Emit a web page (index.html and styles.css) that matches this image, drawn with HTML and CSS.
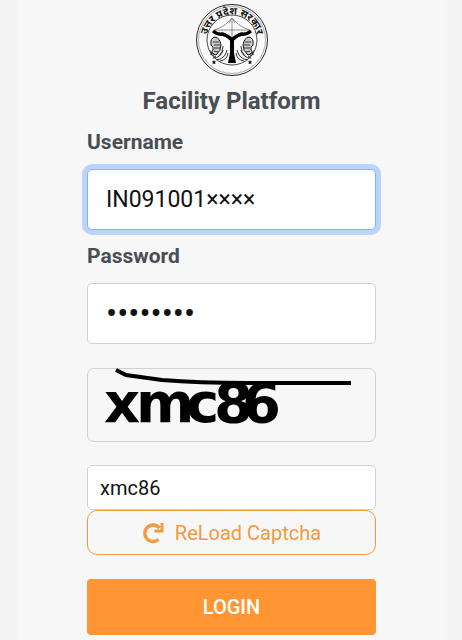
FILE: index.html
```
<!DOCTYPE html>
<html lang="en">
<head>
	<meta charset="utf-8">
	<meta name="viewport" content="width=device-width, initial-scale=1">
	<title>Facility Platform</title>
	<link rel="stylesheet" href="styles.css">
</head>
<body>
	<main class="panel">
		<svg class="emblem" viewBox="0 0 74 74" role="img" aria-label="Uttar Pradesh Sarkar">
			<defs>
				<path id="arc" d="M12 42A25.500 25.500 0 1 1 62 42"/>
				<!-- one fish, mirrored for the other side -->
				<g id="fish">
					<path d="M16 42Q15 35 20 34Q25 35 26 42Q26 48 21 52L16 50Q19 47 18 44z" fill="#ccc" stroke="#111" stroke-width="1"/>
					<path d="M18 39h6M19 42h6M19 45h6M19 48l4 1" stroke="#333" stroke-width="1" fill="none"/>
					<path d="M14 47l5 4M15 51l6 3M18 55q8 0 10-8M21 57q9-1 11-10M25 58q7-1 8-8M28 43q0 6-4 10" stroke="#333" stroke-width="1" fill="none"/>
				</g>
			</defs>
			<circle cx="37" cy="37" r="35.500" fill="#fafafa" stroke="#222" stroke-width="1"/>
			<circle cx="37" cy="37" r="33.500" fill="none" stroke="#777" stroke-width=".6"/>
			<circle cx="37" cy="37" r="25" fill="none" stroke="#222" stroke-width=".8"/>
			<text class="emblem-text" text-anchor="middle"><textPath href="#arc" startOffset="50%">उत्तर प्रदेश सरकार</textPath></text>
			<path d="M19 27Q30 24 37 15Q44 24 55 27M19 27H55M37 15V34M34 20l3-5 3 5" fill="none" stroke="#777" stroke-width=".8"/>
			<use href="#fish"/>
			<use href="#fish" transform="translate(74 0) scale(-1 1)"/>
			<path d="M18 28Q23 32 27 31Q32 32 37 37Q42 32 47 31Q51 32 56 28" fill="none" stroke="#000" stroke-width="3.500"/>
			<path d="M35 36h4v14l2 10h-8l2-10z"/>
			<path d="M19 57l.7 1.400 1.500.2-1.100 1 .3 1.500-1.400-.7-1.400.7.3-1.500-1.100-1 1.500-.2zM55 57l.7 1.400 1.500.2-1.100 1 .3 1.500-1.400-.7-1.400.7.3-1.500-1.100-1 1.500-.2z"/>
		</svg>
		<h1 class="title">Facility Platform</h1>
		<form class="login-form">
			<label class="label" for="username">Username</label>
			<input class="field focused" type="text" id="username" value="IN091001××××">
			<label class="label" for="password">Password</label>
			<input class="field field-password" type="password" id="password" value="password">
			<div class="captcha">
				<svg class="captcha-art" viewBox="0 0 264 72" role="img" aria-label="Captcha">
					<text class="captcha-text" y="53" x="16 48 98 126 154">xmc86</text>
					<path d="M28 1L38 6L74 11Q110 14 160 14H263" fill="none" stroke="#000" stroke-width="4"/>
				</svg>
			</div>
			<input class="field field-small" type="text" id="captcha" aria-label="Enter captcha" value="xmc86">
			<button class="reload" type="button">
				<svg class="reload-icon" viewBox="0 0 22 22" aria-hidden="true">
					<path d="M17.500 6A8.300 8.300 0 1 0 16.500 17.500" fill="none" stroke="currentColor" stroke-width="3.400"/>
					<path d="M21.500 1v9.500h-9V7.500h6V1z" fill="currentColor"/>
				</svg>
				ReLoad Captcha
			</button>
			<button class="login" type="submit">LOGIN</button>
		</form>
	</main>
</body>
</html>
```
FILE: styles.css
```
* {
	box-sizing: border-box;
}
body {
	margin: 0;
	background: #f4f4f4;
	font-family: Roboto, "Liberation Sans", sans-serif;
	color: #494e54;
}
.panel {
	margin: 0 18px;
	padding: 3px 68px 5px 69px;
	background: #f7f7f7;
}
.emblem {
	display: block;
	width: 74px;
	height: 74px;
	margin: 0 auto;
}
.emblem-text {
	font: bold 10px "Noto Sans Devanagari", "Noto Sans", sans-serif;
	fill: #111;
}
.title {
	margin: 10px 0 15px;
	font-size: 24px;
	line-height: 28px;
	font-weight: bold;
	text-align: center;
}
.login-form {
	display: flex;
	flex-direction: column;
}
.label {
	margin-bottom: 15px;
	font-size: 21px;
	line-height: 24px;
	font-weight: bold;
}
.field {
	width: 100%;
	height: 61px;
	margin-bottom: 14px;
	padding: 0 18px;
	background: #fff;
	border: 1px solid #ced2d6;
	border-radius: 5px;
	font-family: inherit;
	font-size: 23px;
	color: #111;
	outline: none;
}
.field-password {
	font-size: 33px;
}
.focused {
	border-color: #86b2f4;
	box-shadow: 0 0 0 5px #bbd4fb;
}
.captcha {
	margin: 10px 0 23px;
	border: 1px solid #ced2d6;
	border-radius: 7px;
}
.captcha-art {
	display: block;
	width: 264px;
	max-width: 100%;
	height: 72px;
	overflow: visible;
}
.captcha-text {
	font: bold 56px "DejaVu Sans", sans-serif;
	fill: #000;
}
.field-small {
	height: 45px;
	margin-bottom: 0;
	padding: 0 12px;
	font-size: 20px;
}
.reload {
	display: flex;
	align-items: center;
	justify-content: center;
	gap: 11px;
	height: 45px;
	padding: 0;
	background: none;
	border: 1px solid #f39a3d;
	border-radius: 10px;
	font-family: inherit;
	font-size: 20px;
	color: #f39a3d;
}
.reload-icon {
	width: 22px;
	height: 22px;
}
.login {
	height: 56px;
	margin-top: 24px;
	background: #ff9633;
	border: none;
	border-radius: 4px;
	font-family: inherit;
	font-size: 20px;
	font-weight: 500;
	color: #fff;
}
```
